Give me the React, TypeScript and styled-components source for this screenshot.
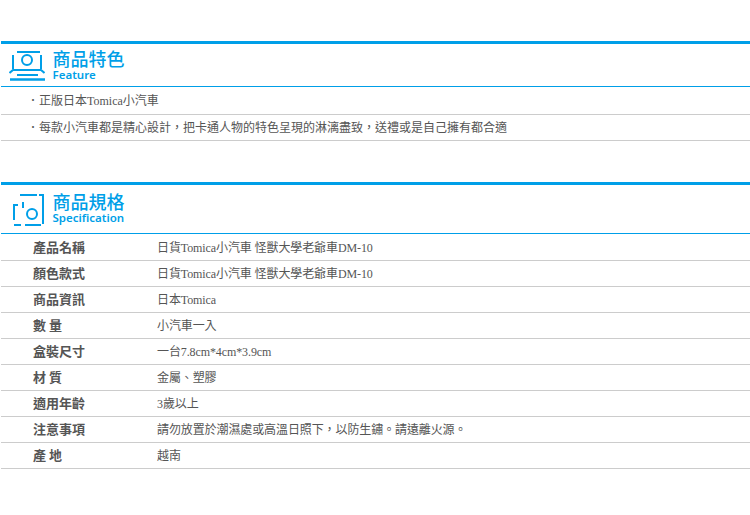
import styled, { createGlobalStyle } from 'styled-components';

const BLUE = '#009fe8';

const GlobalStyle = createGlobalStyle`
  html, body {
    margin: 0;
    padding: 0;
    background: #fff;
  }
`;

const Page = styled.div`
  width: 750px;
  padding-top: 41px;
  font-family: "Liberation Serif", "Noto Sans CJK TC", serif;
  font-size: 12px;
  color: #555;
`;

const Section = styled.section<{ $gap?: number }>`
  margin-bottom: ${(p) => p.$gap ?? 0}px;
`;

const Header = styled.header<{ $height: number }>`
  display: flex;
  align-items: center;
  gap: 7.5px;
  height: ${(p) => p.$height}px;
  padding-left: 8px;
  border-top: 3px solid ${BLUE};
  border-bottom: 1px solid ${BLUE};
  margin-left: 1px;

  svg {
    width: 36px;
    height: 33px;
    flex: none;
  }
`;

const Titles = styled.div<{ $lift: number }>`
  display: flex;
  flex-direction: column;
  gap: 1px;
  padding-bottom: ${(p) => p.$lift}px;
  color: ${BLUE};
  font-family: "Noto Sans CJK TC", "Noto Sans", sans-serif;
`;

const TitleMain = styled.h2`
  margin: 0;
  font-size: 18px;
  line-height: 18px;
  font-weight: 500;
`;

const TitleSub = styled.span`
  font-family: "Noto Sans", sans-serif;
  font-size: 11.5px;
  line-height: 13px;
  font-weight: 600;
`;

const FeatureList = styled.ul`
  list-style: none;
  margin: 0;
  padding: 0;
`;

const FeatureItem = styled.li`
  height: 25px;
  line-height: 26px;
  padding-left: 26px;
  margin-left: 1px;
  border-bottom: 1px solid #ccc;
  white-space: nowrap;

  &:first-child {
    height: 26px;
    padding-top: 1px;
  }
`;

const SpecTable = styled.div`
  display: flex;
  flex-direction: column;
`;

const SpecRow = styled.div`
  display: grid;
  grid-template-columns: 156px 1fr;
  height: 24px;
  padding-top: 1px;
  line-height: 25px;
  margin-left: 1px;
  border-bottom: 1px solid #ccc;

  &:first-child {
    padding-top: 2px;
  }
`;

const SpecLabel = styled.div`
  padding-left: 32px;
  font-size: 13px;
  line-height: 21px;
  font-weight: 700;
  font-family: "Noto Sans CJK TC", serif;
`;

const SpecValue = styled.div`
  white-space: nowrap;
  letter-spacing: -0.1px;
`;

const specs: [string, string][] = [
  ['產品名稱', '日貨Tomica小汽車 怪獸大學老爺車DM-10'],
  ['顏色款式', '日貨Tomica小汽車 怪獸大學老爺車DM-10'],
  ['商品資訊', '日本Tomica'],
  ['數 量', '小汽車一入'],
  ['盒裝尺寸', '一台7.8cm*4cm*3.9cm'],
  ['材 質', '金屬、塑膠'],
  ['適用年齡', '3歲以上'],
  ['注意事項', '請勿放置於潮濕處或高溫日照下，以防生鏽。請遠離火源。'],
  ['產 地', '越南'],
];

// both icons share a 36x33 box, coordinates follow the reference pixels
function FeatureIcon() {
  return (
    <svg viewBox="0 0 36 33" fill="none" stroke={BLUE} strokeWidth="2">
      <path d="M8 3H31" />
      <path d="M4 6V20M32 6V20" />
      <circle cx="18" cy="11" r="5" />
      <path d="M0.5 24L4 21H32L35.5 24" />
      <path d="M8 26H29" />
      <path d="M1 30.5H36" strokeWidth="2.5" />
    </svg>
  );
}

function SpecIcon() {
  return (
    <svg viewBox="1 0 36 33" fill="none" stroke={BLUE} strokeWidth="2">
      <path d="M12 2H29" />
      <path d="M31 2H35V31" />
      <path d="M10 12H6V27" />
      <path d="M15 9V15" />
      <circle cx="24" cy="21" r="5" />
      <path d="M6 32H13M17 32H33" />
    </svg>
  );
}

export default function App() {
  return (
    <Page>
      <GlobalStyle />
      <Section $gap={41}>
        <Header $height={42}>
          <FeatureIcon />
          <Titles $lift={0}>
            <TitleMain>商品特色</TitleMain>
            <TitleSub>Feature</TitleSub>
          </Titles>
        </Header>
        <FeatureList>
          <FeatureItem>．正版日本Tomica小汽車</FeatureItem>
          <FeatureItem>．每款小汽車都是精心設計，把卡通人物的特色呈現的淋漓盡致，送禮或是自己擁有都合適</FeatureItem>
        </FeatureList>
      </Section>
      <Section>
        <Header $height={48}>
          <SpecIcon />
          <Titles $lift={2}>
            <TitleMain>商品規格</TitleMain>
            <TitleSub>Specification</TitleSub>
          </Titles>
        </Header>
        <SpecTable>
          {specs.map(([label, value]) => (
            <SpecRow key={label}>
              <SpecLabel>{label}</SpecLabel>
              <SpecValue>{value}</SpecValue>
            </SpecRow>
          ))}
        </SpecTable>
      </Section>
    </Page>
  );
}
